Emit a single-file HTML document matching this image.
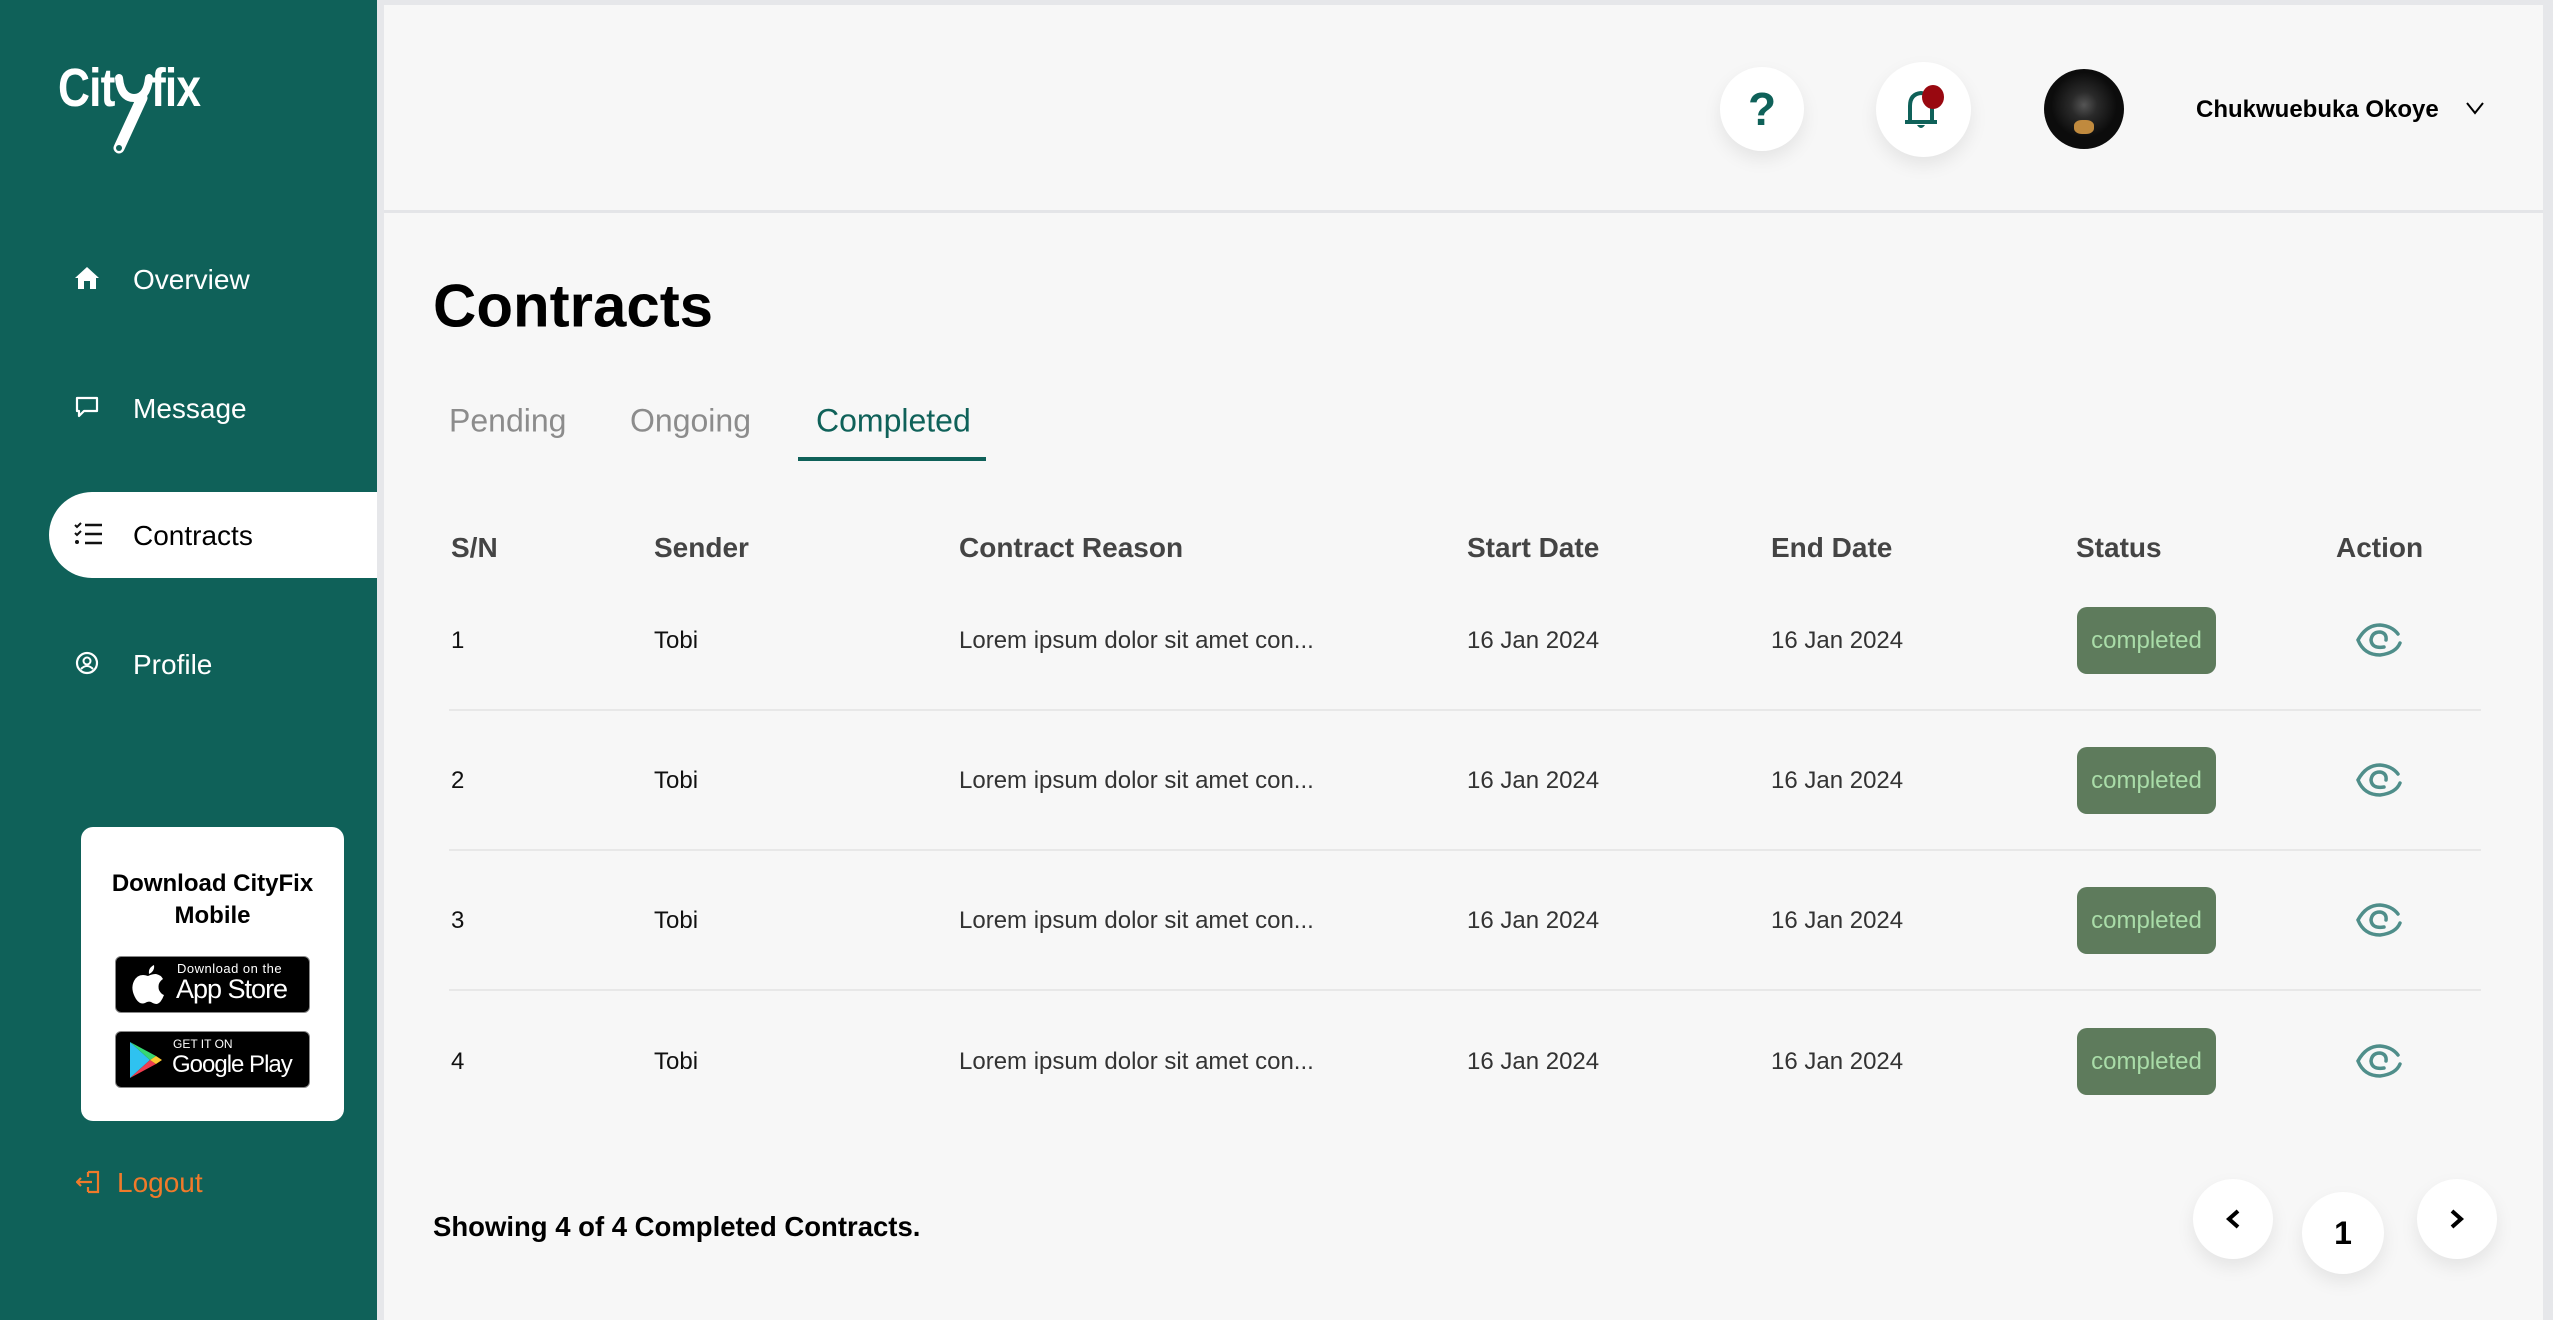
<!DOCTYPE html>
<html><head><meta charset="utf-8"><style>
*{margin:0;padding:0;box-sizing:border-box}
body{width:2553px;height:1320px;overflow:hidden;background:#e6e7ea;font-family:"Liberation Sans",Arial,sans-serif;position:relative}
.a{position:absolute}
.sb{left:0;top:0;width:377px;height:1320px;background:#0f6159}
.main{left:384px;top:5px;width:2159px;height:1315px;background:#f7f7f7}
.hdr{left:384px;top:5px;width:2159px;height:208px;background:#f7f7f7;border-bottom:3px solid #e4e5e8}
.nav{color:#fff;font-size:28px;line-height:1}
.t{transform:translateY(-50%)}
.circ{border-radius:50%;background:#fff;box-shadow:0 8px 18px rgba(0,0,0,.08)}
.th{font-size:28px;font-weight:bold;color:#444}
.td{font-size:24px;color:#111}
.tdg{font-size:24px;color:#333}
.badge{width:139px;height:67px;background:#5e7b5c;border-radius:10px;color:#a9dca8;font-size:24px;line-height:67px;text-align:center}
.sep{left:449px;width:2032px;height:2px;background:#e8e8e8}
.logo{color:#fff;font-size:54px;font-weight:bold;letter-spacing:-1px;line-height:1;transform:scaleX(.82);transform-origin:left top}
</style></head><body>
<div class="a sb"></div>
<div class="a main"></div>
<div class="a hdr"></div>

<!-- logo -->
<div class="a logo" style="left:58px;top:61px">Cit</div>
<div class="a logo" style="left:151px;top:61px">fix</div>
<svg class="a" style="left:105px;top:68px" width="55" height="95" viewBox="0 0 55 95">
<path d="M14 10 Q16 30 29 30 Q42 30 44 10" stroke="#fff" stroke-width="8" fill="none" stroke-linecap="round"/>
<path d="M37 30 L14 80" stroke="#fff" stroke-width="11" stroke-linecap="round"/>
<circle cx="14" cy="80" r="3" fill="#0f6159"/>
</svg>

<!-- nav -->
<svg class="a" style="left:74px;top:266px" width="26" height="24" viewBox="0 0 26 24"><path d="M13 1 L1 12 H4 V23 H10 V15 H16 V23 H22 V12 H25 Z" fill="#fff"/></svg>
<div class="a nav t" style="left:133px;top:280px">Overview</div>
<svg class="a" style="left:75px;top:396px" width="24" height="22" viewBox="0 0 24 22"><path d="M2 2 H22 V15 H9 L4 20 V15 H2 Z" stroke="#fff" stroke-width="2.2" fill="none" stroke-linejoin="round"/></svg>
<div class="a nav t" style="left:133px;top:409px">Message</div>
<div class="a" style="left:49px;top:492px;width:328px;height:86px;background:#fff;border-radius:43px 0 0 43px"></div>
<svg class="a" style="left:73px;top:522px" width="30" height="24" viewBox="0 0 30 24"><path d="M2 3 L4 5 L8 1 M2 11 L4 13 L8 9" stroke="#111" stroke-width="2" fill="none"/><circle cx="4" cy="20" r="2" fill="#111"/><path d="M12 3 H29 M12 12 H29 M12 21 H29" stroke="#111" stroke-width="2.6"/></svg>
<div class="a nav t" style="left:133px;top:536px;color:#000">Contracts</div>
<svg class="a" style="left:75px;top:651px" width="24" height="24" viewBox="0 0 24 24"><circle cx="12" cy="12" r="10" stroke="#fff" stroke-width="2.2" fill="none"/><circle cx="12" cy="10" r="3.5" stroke="#fff" stroke-width="2" fill="none"/><path d="M6 18 Q12 12 18 18" stroke="#fff" stroke-width="2" fill="none"/></svg>
<div class="a nav t" style="left:133px;top:665px">Profile</div>

<!-- download card -->
<div class="a" style="left:81px;top:827px;width:263px;height:294px;background:#fff;border-radius:12px"></div>
<div class="a" style="left:81px;top:868px;width:263px;text-align:center;font-size:24px;font-weight:bold;line-height:32px;color:#000">Download CityFix<br>Mobile</div>
<div class="a" style="left:115px;top:956px;width:195px;height:57px;background:#000;border-radius:6px;border:1px solid #888"></div>
<svg class="a" style="left:130px;top:963px" width="36" height="42" viewBox="0 0 36 42"><path d="M24 2 Q25 8 19 11 Q18 5 24 2Z M18 13 Q22 11 26 11 Q31 12 33 16 Q27 20 29 27 Q31 31 34 32 Q31 40 27 41 Q24 41 21 39 Q18 38 15 40 Q10 42 6 36 Q0 26 4 18 Q7 12 13 12 Q15 12 18 13Z" fill="#fff"/></svg>
<div class="a" style="left:177px;top:961px;color:#fff;font-size:13px;letter-spacing:.5px">Download on the</div>
<div class="a" style="left:176px;top:974px;color:#fff;font-size:27px;letter-spacing:-1px">App Store</div>
<div class="a" style="left:115px;top:1031px;width:195px;height:57px;background:#000;border-radius:6px;border:1px solid #888"></div>
<svg class="a" style="left:128px;top:1040px" width="36" height="40" viewBox="0 0 36 40"><path d="M2 2 L22 20 L2 38Z" fill="#2fc2f0"/><path d="M2 2 L28 16 L22 20Z" fill="#36d873"/><path d="M2 38 L28 24 L22 20Z" fill="#ef3d50"/><path d="M28 16 L34 20 L28 24 L22 20Z" fill="#fdc930"/></svg>
<div class="a" style="left:173px;top:1037px;color:#fff;font-size:12px">GET IT ON</div>
<div class="a" style="left:172px;top:1051px;color:#fff;font-size:24px;letter-spacing:-1px">Google Play</div>

<!-- logout -->
<svg class="a" style="left:76px;top:1170px" width="26" height="24" viewBox="0 0 26 24"><path d="M12 2 H22 V22 H12 M12 2 V7 M12 22 V17 M1 12 H16 M5 8 L1 12 L5 16" stroke="#f07a2a" stroke-width="2.2" fill="none"/></svg>
<div class="a nav t" style="left:117px;top:1183px;color:#f07a2a">Logout</div>

<!-- header -->
<div class="a circ" style="left:1720px;top:67px;width:84px;height:84px"></div>
<div class="a" style="left:1720px;top:84px;width:84px;text-align:center;font-size:46px;font-weight:bold;color:#0f6159;line-height:50px">?</div>
<div class="a circ" style="left:1876px;top:62px;width:95px;height:95px"></div>
<svg class="a" style="left:1903px;top:84px" width="42" height="50" viewBox="0 0 42 50"><path d="M7 37 V22 Q7 10 18 9 Q29 10 29 22 V37 M2 38 H34" stroke="#0f6159" stroke-width="4" fill="none"/><path d="M14 41 Q18 47 22 41" fill="#0f6159"/><ellipse cx="30" cy="13" rx="11" ry="12" fill="#990810"/></svg>
<div class="a" style="left:2044px;top:69px;width:80px;height:80px;border-radius:50%;background:radial-gradient(circle at 50% 45%,#555 0,#2a2a2a 22%,#0c0c0c 55%)"></div>
<div class="a" style="left:2074px;top:120px;width:20px;height:14px;border-radius:40%;background:#c08a3e"></div>
<div class="a t" style="left:2196px;top:110px;font-size:24px;font-weight:bold;color:#000">Chukwuebuka Okoye</div>
<svg class="a" style="left:2466px;top:101px" width="18" height="14" viewBox="0 0 18 14"><path d="M1 2 L9 12 L17 2" stroke="#000" stroke-width="2" fill="none"/></svg>

<!-- title -->
<div class="a t" style="left:433px;top:306px;font-size:60px;font-weight:bold;color:#000">Contracts</div>
<div class="a t" style="left:449px;top:421px;font-size:32px;color:#8c8c8c">Pending</div>
<div class="a t" style="left:630px;top:421px;font-size:32px;color:#8c8c8c">Ongoing</div>
<div class="a t" style="left:816px;top:421px;font-size:32px;color:#0f6159">Completed</div>
<div class="a" style="left:798px;top:457px;width:188px;height:4px;background:#0f6159"></div>

<!-- table head -->
<div class="a th t" style="left:451px;top:548px">S/N</div>
<div class="a th t" style="left:654px;top:548px">Sender</div>
<div class="a th t" style="left:959px;top:548px">Contract Reason</div>
<div class="a th t" style="left:1467px;top:548px">Start Date</div>
<div class="a th t" style="left:1771px;top:548px">End Date</div>
<div class="a th t" style="left:2076px;top:548px">Status</div>
<div class="a th t" style="left:2336px;top:548px">Action</div>

<!-- rows -->
<div class="a sep" style="top:709px"></div>
<div class="a sep" style="top:849px"></div>
<div class="a sep" style="top:989px"></div>

<div class="a td t" style="left:451px;top:641px">1</div><div class="a td t" style="left:654px;top:641px">Tobi</div><div class="a tdg t" style="left:959px;top:641px">Lorem ipsum dolor sit amet con...</div><div class="a tdg t" style="left:1467px;top:641px">16 Jan 2024</div><div class="a tdg t" style="left:1771px;top:641px">16 Jan 2024</div><div class="a badge" style="left:2077px;top:607px">completed</div>
<div class="a td t" style="left:451px;top:781px">2</div><div class="a td t" style="left:654px;top:781px">Tobi</div><div class="a tdg t" style="left:959px;top:781px">Lorem ipsum dolor sit amet con...</div><div class="a tdg t" style="left:1467px;top:781px">16 Jan 2024</div><div class="a tdg t" style="left:1771px;top:781px">16 Jan 2024</div><div class="a badge" style="left:2077px;top:747px">completed</div>
<div class="a td t" style="left:451px;top:921px">3</div><div class="a td t" style="left:654px;top:921px">Tobi</div><div class="a tdg t" style="left:959px;top:921px">Lorem ipsum dolor sit amet con...</div><div class="a tdg t" style="left:1467px;top:921px">16 Jan 2024</div><div class="a tdg t" style="left:1771px;top:921px">16 Jan 2024</div><div class="a badge" style="left:2077px;top:887px">completed</div>
<div class="a td t" style="left:451px;top:1062px">4</div><div class="a td t" style="left:654px;top:1062px">Tobi</div><div class="a tdg t" style="left:959px;top:1062px">Lorem ipsum dolor sit amet con...</div><div class="a tdg t" style="left:1467px;top:1062px">16 Jan 2024</div><div class="a tdg t" style="left:1771px;top:1062px">16 Jan 2024</div><div class="a badge" style="left:2077px;top:1028px">completed</div>

<svg class="a" style="left:2356px;top:621px" width="46" height="38" viewBox="0 0 46 38"><path d="M44 22 Q40 32 24 34 Q8 34 2 19 Q10 4 24 4 Q36 5 42 13" stroke="#4f8e8a" stroke-width="3.5" fill="none" stroke-linecap="round"/><path d="M28 26 Q16 28 15 19 Q16 11 24 11 Q31 12 30 19" stroke="#4f8e8a" stroke-width="3.5" fill="none" stroke-linecap="round"/></svg>
<svg class="a" style="left:2356px;top:761px" width="46" height="38" viewBox="0 0 46 38"><path d="M44 22 Q40 32 24 34 Q8 34 2 19 Q10 4 24 4 Q36 5 42 13" stroke="#4f8e8a" stroke-width="3.5" fill="none" stroke-linecap="round"/><path d="M28 26 Q16 28 15 19 Q16 11 24 11 Q31 12 30 19" stroke="#4f8e8a" stroke-width="3.5" fill="none" stroke-linecap="round"/></svg>
<svg class="a" style="left:2356px;top:901px" width="46" height="38" viewBox="0 0 46 38"><path d="M44 22 Q40 32 24 34 Q8 34 2 19 Q10 4 24 4 Q36 5 42 13" stroke="#4f8e8a" stroke-width="3.5" fill="none" stroke-linecap="round"/><path d="M28 26 Q16 28 15 19 Q16 11 24 11 Q31 12 30 19" stroke="#4f8e8a" stroke-width="3.5" fill="none" stroke-linecap="round"/></svg>
<svg class="a" style="left:2356px;top:1042px" width="46" height="38" viewBox="0 0 46 38"><path d="M44 22 Q40 32 24 34 Q8 34 2 19 Q10 4 24 4 Q36 5 42 13" stroke="#4f8e8a" stroke-width="3.5" fill="none" stroke-linecap="round"/><path d="M28 26 Q16 28 15 19 Q16 11 24 11 Q31 12 30 19" stroke="#4f8e8a" stroke-width="3.5" fill="none" stroke-linecap="round"/></svg>

<!-- footer -->
<div class="a t" style="left:433px;top:1227px;font-size:27.5px;font-weight:bold;color:#000">Showing 4 of 4 Completed Contracts.</div>
<div class="a circ" style="left:2193px;top:1179px;width:80px;height:80px"></div>
<svg class="a" style="left:2224px;top:1208px" width="18" height="22" viewBox="0 0 18 22"><path d="M14 3 L5 11 L14 19" stroke="#000" stroke-width="4" fill="none"/></svg>
<div class="a circ" style="left:2302px;top:1192px;width:82px;height:82px"></div>
<div class="a" style="left:2302px;top:1213px;width:82px;text-align:center;font-size:32px;font-weight:bold;line-height:40px">1</div>
<div class="a circ" style="left:2417px;top:1179px;width:80px;height:80px"></div>
<svg class="a" style="left:2448px;top:1208px" width="18" height="22" viewBox="0 0 18 22"><path d="M4 3 L13 11 L4 19" stroke="#000" stroke-width="4" fill="none"/></svg>
</body></html>
